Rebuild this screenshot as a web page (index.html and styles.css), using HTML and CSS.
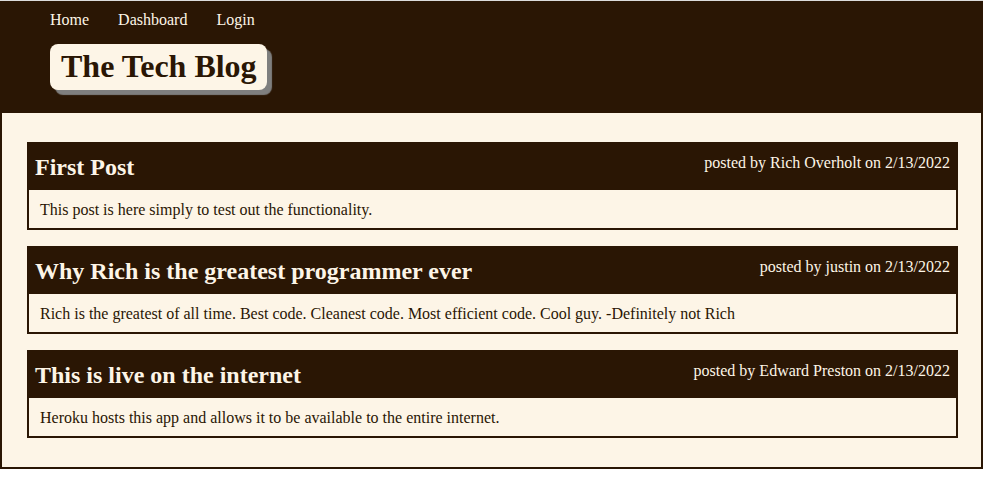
FILE: index.html
```html
<!DOCTYPE html>
<html>
<head>
<meta charset="utf-8">
<title>The Tech Blog</title>
<link rel="stylesheet" href="styles.css">
</head>
<body>
<div class="page">
  <header class="site-header">
    <nav class="nav">
      <a href="#">Home</a>
      <a href="#">Dashboard</a>
      <a href="#">Login</a>
    </nav>
    <h1 class="brand">The Tech Blog</h1>
  </header>
  <main class="posts">
    <article class="post">
      <div class="post-head">
        <h2 class="post-title">First Post</h2>
        <span class="post-meta">posted by Rich Overholt on 2/13/2022</span>
      </div>
      <p class="post-body">This post is here simply to test out the functionality.</p>
    </article>
    <article class="post">
      <div class="post-head">
        <h2 class="post-title">Why Rich is the greatest programmer ever</h2>
        <span class="post-meta">posted by justin on 2/13/2022</span>
      </div>
      <p class="post-body">Rich is the greatest of all time. Best code. Cleanest code. Most efficient code. Cool guy. -Definitely not Rich</p>
    </article>
    <article class="post">
      <div class="post-head">
        <h2 class="post-title">This is live on the internet</h2>
        <span class="post-meta">posted by Edward Preston on 2/13/2022</span>
      </div>
      <p class="post-body">Heroku hosts this app and allows it to be available to the entire internet.</p>
    </article>
  </main>
</div>
</body>
</html>
```
FILE: styles.css
```css
html, body {
  margin: 0;
  padding: 0;
  background: #ffffff;
}
body {
  font-family: "Liberation Serif", "Times New Roman", serif;
  border-top: 1px solid #dcdcdc;
}
.page {
  width: 979px;
  border: 2px solid #2a1604;
  border-top: none;
  background: #fdf5e7;
}
.site-header {
  background: #2a1604;
  height: 112px;
  box-sizing: border-box;
  padding: 10px 0 0 48px;
}
.nav {
  display: flex;
  gap: 29px;
  line-height: 18px;
  font-size: 16px;
}
.nav a {
  color: #fdf5e7;
  text-decoration: none;
}
.brand {
  display: inline-block;
  margin: 15px 0 0 0;
  padding: 4px 10px 5px 11px;
  font-size: 32px;
  line-height: 37px;
  font-weight: bold;
  color: #2a1604;
  background: #fdf5e7;
  border-radius: 8px;
  box-shadow: 5px 5px 1px #7f7f7f;
}
.posts {
  display: flex;
  flex-direction: column;
  gap: 16px;
  padding: 29px 23px 29px 25px;
}
.post {
  border: 2px solid #2a1604;
  background: #fdf5e7;
}
.post-head {
  display: flex;
  justify-content: space-between;
  align-items: flex-start;
  background: #2a1604;
  color: #fdf5e7;
  padding: 9px 6px 9px 6px;
}
.post-title {
  margin: 0;
  font-size: 24px;
  line-height: 28px;
  font-weight: bold;
}
.post-meta {
  font-size: 16px;
  line-height: 18px;
  margin-top: 1px;
}
.post-body {
  margin: 0;
  padding: 11px 11px 9px;
  font-size: 16px;
  line-height: 18px;
  color: #2a1604;
}
```
